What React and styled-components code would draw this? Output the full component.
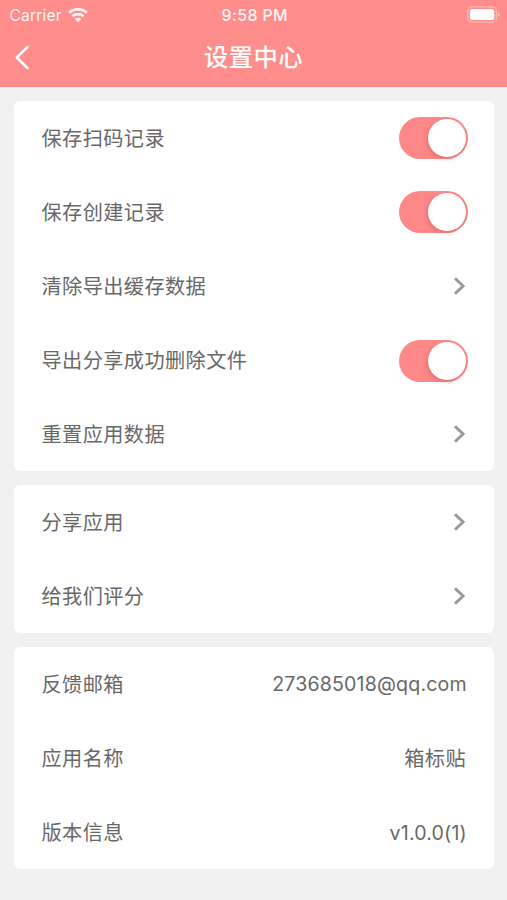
import React from "react"
import styled, { createGlobalStyle } from "styled-components"

const GlobalStyle = createGlobalStyle`
  * {
    box-sizing: border-box;
  }

  body {
    margin: 0;
    background: #f1f1f1;
    font-family: Inter, "Noto Sans CJK SC", sans-serif;
  }
`

const Page = styled.div`
  min-height: 900px;
  background: #f1f1f1;
`

const Header = styled.header`
  height: 87px;
  color: #fff;
  background: #fe8d8b;
`

const StatusBar = styled.div`
  display: grid;
  grid-template-columns: 1fr auto 1fr;
  align-items: center;
  height: 29px;
  padding: 0 7px 0 9.5px;
  font-size: 15.6px;
  line-height: 29px;
`

const Carrier = styled.div`
  display: flex;
  align-items: center;
  gap: 6px;
  padding-top: 1px;
  letter-spacing: 0.15px;
  opacity: 0.9;
`

const Time = styled.div`
  padding-top: 1px;
  font-size: 15.9px;
  font-weight: 500;
  letter-spacing: 0.4px;
  opacity: 0.92;
`

const BatteryIcon = styled.svg`
  justify-self: end;
  margin-bottom: 2px;
`

const NavBar = styled.div`
  display: grid;
  grid-template-columns: 44px 1fr 44px;
  align-items: center;
  height: 58px;
`

const BackButton = styled.button`
  display: flex;
  height: 58px;
  padding: 16px 0 0 13.5px;
  border: 0;
  color: inherit;
  background: none;
`

const Title = styled.h1`
  margin: 0;
  font-size: 24.3px;
  font-weight: 500;
  line-height: 56px;
  height: 58px;
  letter-spacing: 0.4px;
  text-align: center;
`

const Content = styled.main`
  display: flex;
  flex-direction: column;
  gap: 13.5px;
  padding: 13.5px 13px 0 14px;
`

const Card = styled.section`
  border-radius: 6px;
  background: #fff;
`

const Row = styled.div`
  display: flex;
  align-items: center;
  justify-content: space-between;
  height: 74.2px;
  padding: 1px 26px 0 27.5px;
  color: #686868;
  font-size: 20.2px;
  line-height: 30px;
`

const Label = styled.span`
  padding-top: 1px;
  letter-spacing: 0.4px;
`

const Value = styled.span`
  padding-right: ${props => (props.$latin ? 1.2 : 2)}px;
  font-size: ${props => (props.$latin ? 19.6 : 20.2)}px;
  letter-spacing: ${props => (props.$latin ? 0.16 : 0.4)}px;
`

const Switch = styled.button`
  display: flex;
  justify-content: flex-end;
  width: 69px;
  height: 42px;
  padding: 2px;
  border: 0;
  border-radius: 21px;
  background: #fe8787;
`

const Knob = styled.span`
  width: 38px;
  height: 38px;
  border-radius: 50%;
  background: #fff;
  box-shadow: -1px 2px 4px rgba(120, 20, 20, 0.2);
`

const Arrow = styled.svg`
  margin: 0 2px 1px 0;
`

const WifiIcon = () => (
  <svg width="20" height="15" viewBox="0 0 20 15" fill="none">
    <path d="M1.1 4.7C6 .1 14 .1 18.9 4.7" stroke="currentColor" strokeWidth="2.8" />
    <path d="M4.4 8.3c3.2-2.8 8-2.8 11.2 0" stroke="currentColor" strokeWidth="2.7" />
    <path d="M6.8 11c1.7-1.7 4.7-1.7 6.4 0L10 14.2z" fill="currentColor" />
  </svg>
)

const Battery = () => (
  <BatteryIcon width="33" height="17" viewBox="0 0 33 17" fill="none">
    <rect x=".8" y=".8" width="28.6" height="15.4" rx="4.5" stroke="#fff" strokeOpacity=".4" strokeWidth="1.3" />
    <rect x="2.9" y="3.1" width="24.4" height="10.8" rx="2.2" fill="#fff" />
    <path d="M31 6v5c2-.8 2-4.2 0-5z" fill="#fff" fillOpacity=".5" />
  </BatteryIcon>
)

const Toggle = ({ label }) => (
  <Switch type="button" role="switch" aria-checked="true" aria-label={label}>
    <Knob />
  </Switch>
)

const Chevron = () => (
  <Arrow width="13" height="20" viewBox="0 0 13 20" fill="none">
    <path d="M2 2.4 10.2 10 2 17.6" stroke="#999" strokeWidth="2.8" />
  </Arrow>
)

const Item = ({ label, children }) => (
  <Row>
    <Label>{label}</Label>
    {children}
  </Row>
)

const App = () => (
  <Page lang="zh-CN">
    <GlobalStyle />
    <Header>
      <StatusBar>
        <Carrier>
          Carrier
          <WifiIcon />
        </Carrier>
        <Time>9:58 PM</Time>
        <Battery />
      </StatusBar>
      <NavBar>
        <BackButton type="button" aria-label="返回">
          <svg width="16" height="25" viewBox="0 0 16 25" fill="none">
            <path d="M13.5 1.8 2.8 12.5l10.7 10.7" stroke="currentColor" strokeWidth="2.6" strokeLinecap="round" strokeLinejoin="round" />
          </svg>
        </BackButton>
        <Title>设置中心</Title>
      </NavBar>
    </Header>
    <Content>
      <Card>
        <Item label="保存扫码记录"><Toggle label="保存扫码记录" /></Item>
        <Item label="保存创建记录"><Toggle label="保存创建记录" /></Item>
        <Item label="清除导出缓存数据"><Chevron /></Item>
        <Item label="导出分享成功删除文件"><Toggle label="导出分享成功删除文件" /></Item>
        <Item label="重置应用数据"><Chevron /></Item>
      </Card>
      <Card>
        <Item label="分享应用"><Chevron /></Item>
        <Item label="给我们评分"><Chevron /></Item>
      </Card>
      <Card>
        <Item label="反馈邮箱"><Value $latin>273685018@qq.com</Value></Item>
        <Item label="应用名称"><Value>箱标贴</Value></Item>
        <Item label="版本信息"><Value $latin>v1.0.0(1)</Value></Item>
      </Card>
    </Content>
  </Page>
)

export default App
